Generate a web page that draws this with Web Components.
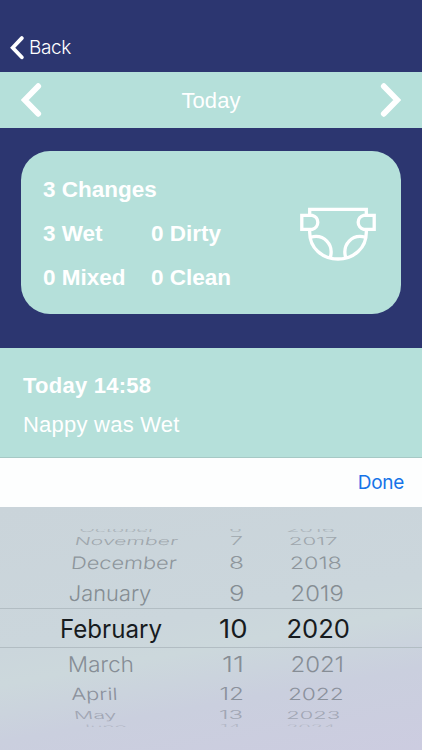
<!DOCTYPE html>
<html lang="en"><head><meta charset="utf-8"><title>Nappy changes</title>
<style>html,body{margin:0;background:#2c3670}body{width:422px;height:750px;overflow:hidden}</style></head>
<body><nappy-screen></nappy-screen>
<script>
class Base extends HTMLElement {
  constructor(){super();this.attachShadow({mode:'open'});}
  connectedCallback(){this.shadowRoot.innerHTML=this.render();}
}
customElements.define('chevron-icon',class extends Base{
  render(){
    const big=this.getAttribute('size')==='big', right=this.getAttribute('dir')==='right';
    const w=big?21:14,h=big?35:24;
    return `<style>:host{display:block;width:${w}px;height:${h}px}svg{display:block;${right?'transform:scaleX(-1)':''}}</style>
    <svg width="${w}" height="${h}" fill="none" stroke="#fff" stroke-linejoin="miter" stroke-linecap="round"><path stroke-width="${big?5.8:3.8}" d="${big?'M17.2 3.2L3.7 17L17.2 30.8':'M11.8 2.1L2.7 11.7L11.8 21.3'}"/></svg>`;
  }
});
customElements.define('nav-bar',class extends Base{
  render(){return `<style>:host{display:flex;align-items:center;height:72px;box-sizing:border-box;padding:24px 0 0 10px;background:#2c3670;color:#fff;font:300 19px/24px Inter,sans-serif}
  span{margin-left:5px;letter-spacing:-.4px}</style><chevron-icon></chevron-icon><span><slot></slot></span>`;}
});
customElements.define('day-bar',class extends Base{
  render(){return `<style>:host{display:flex;align-items:center;justify-content:space-between;height:56px;padding:0 21px;box-sizing:border-box;background:#b5e0da;color:#fff;font:22px/26px "Liberation Sans",sans-serif}
  span{padding-top:2px;letter-spacing:.1px}</style><chevron-icon size="big"></chevron-icon><span><slot></slot></span><chevron-icon size="big" dir="right"></chevron-icon>`;}
});
customElements.define('nappy-icon',class extends Base{
  render(){return `<style>:host{display:block;width:76px;height:56px}svg{display:block}</style>
  <svg width="76" height="56" fill="none" stroke="#fff" stroke-width="3.3"><path d="M9.7 8.5V2.3H66.3V8.5M9.7 22.5V25.5C9.7 41 22 52 38 52S66.3 41 66.3 25.5V22.5"/><path d="M1.8 8.3H12.3A7.2 7.2 0 0 1 12.3 22.3H1.8ZM74.2 8.3H63.7A7.2 7.2 0 0 0 63.7 22.3H74.2Z"/><path d="M10.4 30.3C24 26.5 34 37.5 30.3 50.5M65.6 30.3C52 26.5 42 37.5 45.7 50.5"/></svg>`;}
});
customElements.define('summary-card',class extends Base{
  render(){return `<style>:host{display:flex;justify-content:space-between;margin:23px 21px 34px;height:163px;box-sizing:border-box;padding:17px 25px 0 22px;border-radius:29px;background:#b5e0da;color:#fff;font:bold 22.5px/44px "Liberation Sans",sans-serif}
  .g{display:grid;grid-template-columns:108px auto;grid-auto-rows:44px;white-space:nowrap}.w{grid-column:1/3}nappy-icon{margin-top:39px}</style>
  <div class="g"><div class="w">3 Changes</div><div>3 Wet</div><div>0 Dirty</div><div>0 Mixed</div><div>0 Clean</div></div><nappy-icon></nappy-icon>`;}
});
customElements.define('change-entry',class extends Base{
  render(){return `<style>:host{display:block;height:110px;box-sizing:border-box;padding:18px 23px 0;background:#b5e0da;border-bottom:1px solid #a6c9c5;color:#fff;font:22px/39px "Liberation Sans",sans-serif}
  .t{font-weight:bold;letter-spacing:.25px}.n{letter-spacing:.23px}</style><div class="t"><slot name="time"></slot></div><div class="n"><slot></slot></div>`;}
});
customElements.define('done-bar',class extends Base{
  render(){return `<style>:host{display:flex;align-items:center;justify-content:flex-end;height:49px;padding-right:18px;background:#fdfefe;color:#1674e8;font:19px/24px Inter,sans-serif;letter-spacing:-.3px}</style><slot></slot>`;}
});
/* One row of the wheel. Each cell: text, left, right; squash is the vertical foreshortening. */
customElements.define('wheel-row',class extends Base{
  render(){
    const a=n=>this.getAttribute(n),h=+a('h'),base=+a('base'),cap=+a('cap'),sel=this.hasAttribute('selected'),sk=+(a('skew')||0);
    const size=25,sy=cap/(size*.727);
    const cells=a('cells').split(';').map((c,i)=>{const [t,l,r]=c.split(',');
      return `<text transform="translate(${l} ${base}) skewX(${i==0?sk:i==2?-sk/3:0}) scale(1 ${sy})" textLength="${r-l}" lengthAdjust="spacingAndGlyphs">${t}</text>`;}).join('');
    return `<style>:host{display:block;height:${h}px;box-sizing:border-box;${sel?'border:solid #b2bdc3;border-width:1px 0;':''}}svg{display:block;overflow:hidden}text{font:${sel?400:350} ${size}px Inter,sans-serif;fill:${a('color')}}</style>
    <svg width="422" height="${sel?h-2:h}">${cells}</svg>`;
  }
});
customElements.define('date-wheel',class extends Base{
  render(){
    const rows=[
      [4,2.8,5,'#adb5bb','October,79,155;6,229,242;2016,286,335',-10],
      [15,12.3,8,'#9fa7ad','November,74,177;7,230,243;2017,289,338',-12],
      [29,21,12.4,'#8e969c','December,70.5,176;8,229,244;2018,290,342',-6],
      [31,24,15.7,'#858d93','January,68.5,151;9,229,244.5;2019,290.5,344',-2],
      [40,28.5,18.2,'#171b1e','February,60,162;10,219,247.5;2020,286.5,350',0],
      [32,23.6,15.7,'#868d95','March,68,134;11,222,244;2021,290.5,344',1],
      [26,20,12.2,'#8b919c','April,71.5,118;12,219.5,244;2022,288,343.5',3],
      [17,13.3,8,'#a1a6b4','May,74.5,117;13,219,243;2023,286,340',8],
      [4,6,4.5,'#b3b8c6','June,79,127;14,220,241;2024,286,335',10]
    ];
    return `<style>:host{display:block;height:243px;padding-top:22px;box-sizing:border-box;background:linear-gradient(170deg,#cad4da 0%,#cbd6dc 45%,#ccd8dc 56%,#cacfde 74%,#cccce0 100%)}</style>`+
    rows.map((r,i)=>`<wheel-row ${i==4?'selected':''} h="${r[0]}" base="${r[1]}" cap="${r[2]}" color="${r[3]}" cells="${r[4]}" skew="${r[5]}"></wheel-row>`).join('');
  }
});
customElements.define('nappy-screen',class extends Base{
  render(){return `<style>:host{display:flex;flex-direction:column;width:422px;height:750px;background:#2c3670}</style>
  <nav-bar>Back</nav-bar><day-bar>Today</day-bar><summary-card></summary-card>
  <change-entry><span slot="time">Today 14:58</span>Nappy was Wet</change-entry>
  <done-bar>Done</done-bar><date-wheel></date-wheel>`;}
});
</script></body></html>
